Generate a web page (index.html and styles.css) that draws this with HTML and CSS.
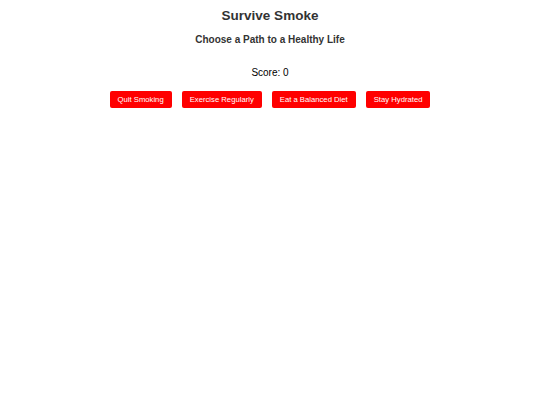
FILE: index.html
```html
<!DOCTYPE html>
<html>
<head>
<meta charset="utf-8">
<link rel="stylesheet" href="styles.css">
</head>
<body>
<div class="game">
  <h1 class="title">Survive Smoke</h1>
  <h2 class="subtitle">Choose a Path to a Healthy Life</h2>
  <p class="score">Score: 0</p>
  <div class="choices">
    <button class="choice">Quit Smoking</button>
    <button class="choice">Exercise Regularly</button>
    <button class="choice">Eat a Balanced Diet</button>
    <button class="choice">Stay Hydrated</button>
  </div>
</div>
</body>
</html>
```
FILE: styles.css
```css
html, body {
  margin: 0;
  padding: 0;
  background: #fff;
}
body {
  font-family: "Liberation Sans", Arial, sans-serif;
  color: #333;
}
.game {
  text-align: center;
  padding-top: 8px;
}
.title {
  font-size: 13.5px;
  font-weight: bold;
  margin: 0 0 8px;
  line-height: 16px;
}
.subtitle {
  font-size: 10px;
  font-weight: bold;
  margin: 0 0 17px;
  line-height: 16px;
}
.score {
  font-size: 10px;
  color: #000;
  margin: 0 0 10px;
  line-height: 16px;
}
.choices {
  display: flex;
  justify-content: center;
  gap: 10px;
}
.choice {
  background: #ff0000;
  color: #fff;
  border: none;
  border-radius: 2px;
  font-family: "Liberation Sans", Arial, sans-serif;
  font-size: 7.7px;
  height: 17px;
  padding: 0 8px;
  cursor: pointer;
}
```
